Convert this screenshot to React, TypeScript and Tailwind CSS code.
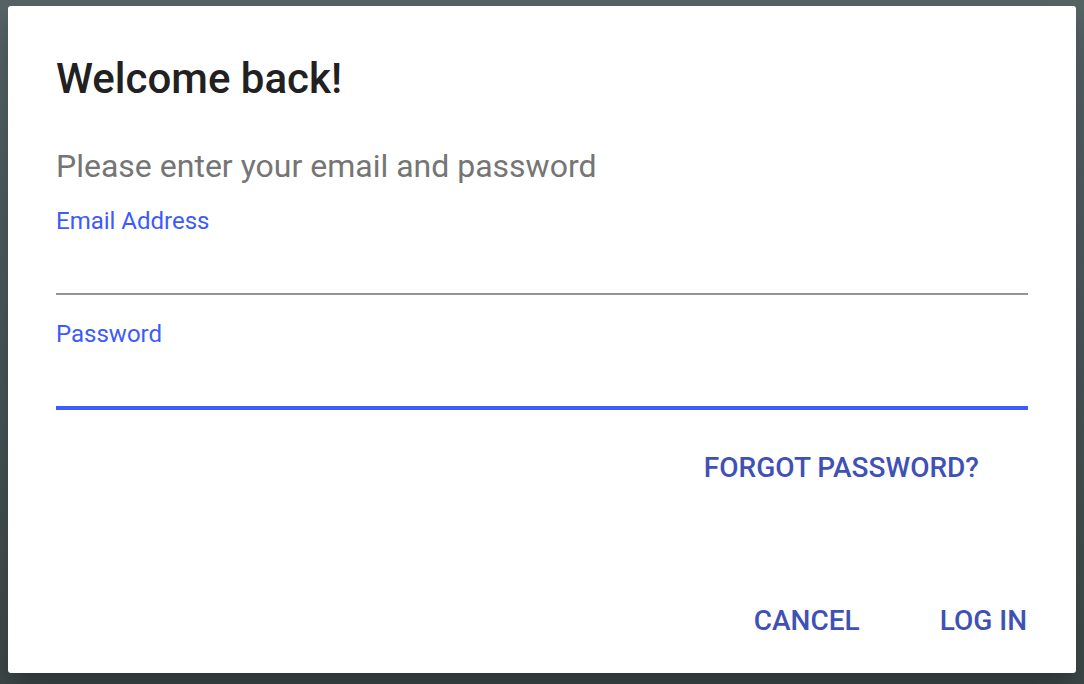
import { useState } from "react";

const FONT = { fontFamily: "Roboto, 'Liberation Sans', sans-serif" };

export default function App() {
  const [email, setEmail] = useState("");
  const [password, setPassword] = useState("");

  return (
    <div
      className="h-[684px] w-[1084px] bg-gradient-to-b from-[#556365] to-[#3d4849] pt-[6px] pl-[8px] pr-[8px] pb-[11px]"
      style={FONT}
    >
      <div className="flex h-full w-full flex-col rounded-[3px] bg-white px-12 shadow-[0_11px_15px_-7px_rgba(0,0,0,0.2),0_24px_38px_3px_rgba(0,0,0,0.14)]">
        <h1 className="mt-[47px] text-[42px] font-medium leading-[52px] text-[#212121]">Welcome back!</h1>

        <p className="mt-[41px] text-[32px] leading-[40px] text-[#757575]">
          Please enter your email and password
        </p>

        <label className="mt-[21px] block">
          <span className="block text-[24px] leading-[28px] text-[#3d5afe]">Email Address</span>
          <input
            type="email"
            value={email}
            onChange={(e) => setEmail(e.target.value)}
            className="block h-[60px] w-full border-b-2 border-[#949494] bg-transparent text-[28px] text-[#212121] outline-none"
          />
        </label>

        <label className="mt-[25px] block">
          <span className="block text-[24px] leading-[28px] text-[#3d5afe]">Password</span>
          <input
            type="password"
            value={password}
            onChange={(e) => setPassword(e.target.value)}
            className="block h-[62px] w-full border-b-4 border-[#3d5afe] bg-transparent text-[28px] text-[#212121] outline-none"
          />
        </label>

        <div className="mt-[38px] flex justify-end pr-[49px]">
          <button className="text-[28px] font-medium uppercase leading-[40px] text-[#3f51b5]">
            Forgot password?
          </button>
        </div>

        <div className="mt-auto mb-[32px] flex justify-end gap-[80px] pr-px">
          <button className="text-[28px] font-medium uppercase leading-[40px] text-[#3f51b5]">Cancel</button>
          <button className="text-[28px] font-medium uppercase leading-[40px] text-[#3f51b5]">Log in</button>
        </div>
      </div>
    </div>
  );
}
